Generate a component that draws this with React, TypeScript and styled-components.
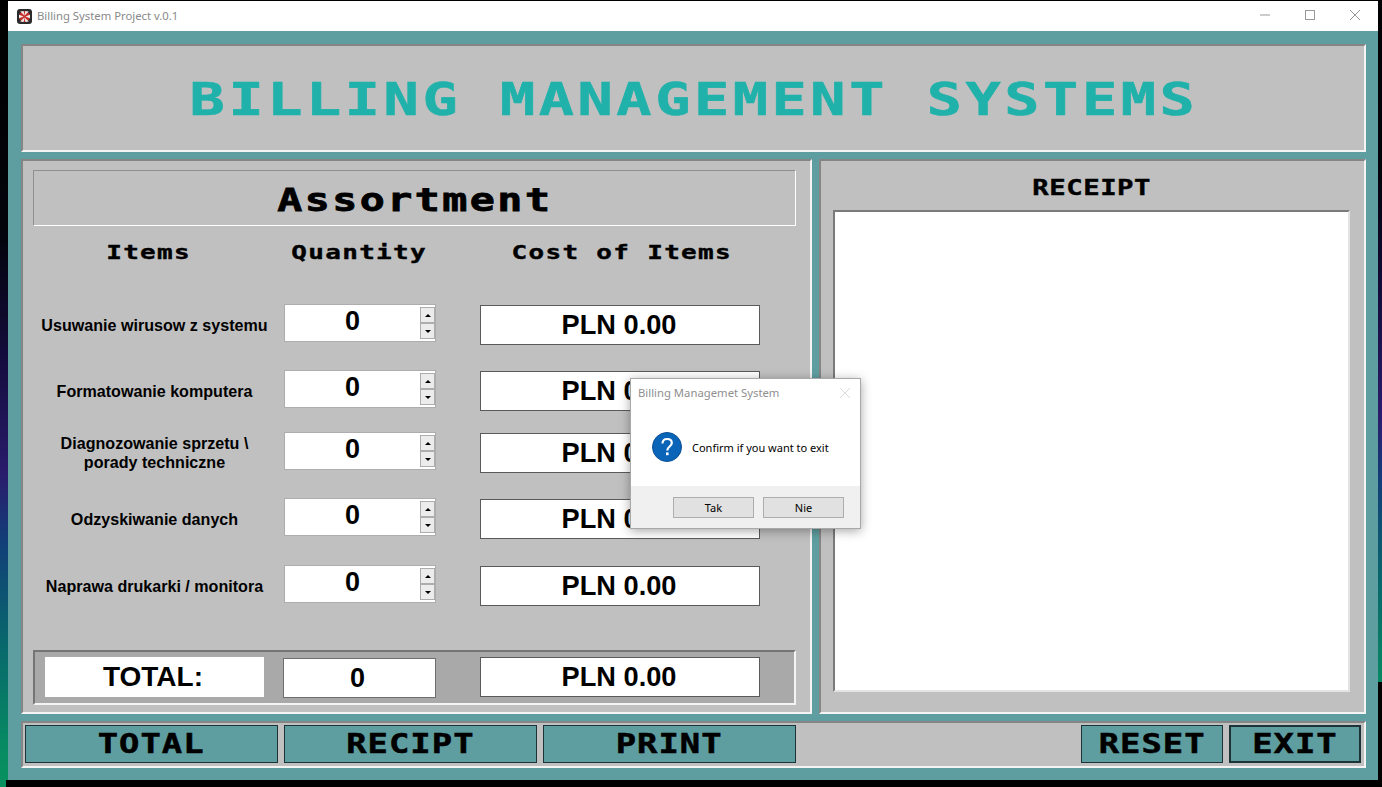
import styled, { createGlobalStyle } from "styled-components";

const GlobalStyle = createGlobalStyle`
    html, body {
        margin: 0;
        height: 100%;
        overflow: hidden;
    }
    body {
        background: #000;
    }
`

const Screen = styled.div`
    width: 1382px;
    height: 787px;
    box-sizing: border-box;
    padding: 1px 4px 7px 8px;
    position: relative;
    background: linear-gradient(177.5deg, #000 0%, #03030c 28%, #140c3c 42%, #2a1c6c 56%, #123f78 64%, #08686c 76%, #078a62 88%, #0a9a58 100%);
`

const Window = styled.div`
    height: 100%;
    display: flex;
    flex-direction: column;
    background: #5f9ea0;
`

const TitleBar = styled.div`
    height: 30px;
    flex: none;
    display: flex;
    align-items: center;
    background: #fff;
    padding-left: 9px;
    font: 11.3px "Noto Sans", sans-serif;
    color: #8a8a8a;
`

const TitleText = styled.span`
    margin-left: 5px;
    padding-bottom: 2px;
`

const WindowControls = styled.div`
    margin-left: auto;
    display: flex;
    align-items: center;
    gap: 35px;
    padding-right: 18px;
    padding-bottom: 2px;
`

const Content = styled.div`
    flex: 1;
    display: flex;
    flex-direction: column;
    gap: 7px;
    padding: 13px 12px 12px 13px;
`

const Panel = styled.div`
    box-sizing: border-box;
    background: #c0c0c0;
    border: 2px solid;
    border-color: #858585 #f4f4f4 #f4f4f4 #858585;
`

const Header = styled(Panel)`
    height: 108px;
    display: flex;
    align-items: center;
    justify-content: center;
`

const pixelFont = `"DejaVu Sans Mono", "Liberation Mono", monospace`

// the original uses a wide bitmap font, a stretched mono is the nearest we have
const Wide = styled.span`
    display: inline-block;
    transform: scaleX(1.3);
    white-space: pre;
`

const Title = styled.h1`
    margin: 3px 0 0 0;
    font: bold 45px ${pixelFont};
    letter-spacing: 2.75px;
    color: #20b2aa;
    -webkit-text-stroke: 0.6px #20b2aa;
`

const Main = styled.div`
    display: flex;
    gap: 7px;
    height: 555px;
`

const LeftPanel = styled(Panel)`
    width: 791px;
    padding: 9px 14px 7px 10px;
    display: flex;
    flex-direction: column;
`

const Heading = styled.div`
    height: 56px;
    box-sizing: border-box;
    flex: none;
    padding-top: 4px;
    display: flex;
    align-items: center;
    justify-content: center;
    border: 1px solid;
    border-color: #8f8f8f #fff #fff #8f8f8f;
    font: bold 32px ${pixelFont};
    letter-spacing: 1.9px;
    color: #000;
    -webkit-text-stroke: 0.8px #000;
`

const Columns = styled.div`
    display: grid;
    grid-template-columns: 243px 204px 280px;
    justify-items: center;
    text-align: center;
`

const ColumnHeads = styled(Columns)`
    height: 52px;
    align-items: center;
    flex: none;
    margin-bottom: 26px;
`

const ColumnHead = styled.div<{ $shift?: number }>`
    font: bold 20px ${pixelFont};
    letter-spacing: 1px;
    color: #000;
    -webkit-text-stroke: 0.4px #000;
    margin-right: ${props => props.$shift ?? 0}px;
`

const Rows = styled.div`
    display: flex;
    flex-direction: column;
`

const Row = styled(Columns)<{ $height: number }>`
    height: ${props => props.$height}px;
`

const ItemLabel = styled.div`
    height: 40px;
    margin-top: 1px;
    display: flex;
    align-items: center;
    font: bold 16.1px/19px "Liberation Sans", Arial, sans-serif;
    color: #000;
`

const Spinner = styled.div`
    width: 152px;
    height: 38px;
    box-sizing: border-box;
    justify-self: start;
    margin-left: 8px;
    display: flex;
    align-items: stretch;
    background: #fff;
    border: 1px solid #adadad;
`

const SpinnerValue = styled.div`
    flex: 1;
    text-align: center;
    font: bold 27px/32px "Liberation Sans", Arial, sans-serif;
    color: #000;
`

const SpinnerArrows = styled.div`
    width: 15px;
    margin: 2px 0;
    display: flex;
    flex-direction: column;
`

const SpinnerArrow = styled.div<{ $down?: boolean }>`
    flex: 1;
    box-sizing: border-box;
    display: flex;
    align-items: center;
    justify-content: center;
    background: #ececec;
    border: 1px solid #adadad;

    &::after {
        content: "";
        border-left: 3px solid transparent;
        border-right: 3px solid transparent;
        ${props => props.$down ? "border-top: 3px solid #000;" : "border-bottom: 3px solid #000;"}
    }
`

const CostBox = styled.div<{ $flat?: boolean }>`
    width: 280px;
    height: 40px;
    box-sizing: border-box;
    margin-top: ${props => props.$flat ? 0 : 1}px;
    padding-right: 2px;
    display: flex;
    align-items: center;
    justify-content: center;
    background: #fff;
    border: 1px solid #5a5a5a;
    font: bold 27.2px "Liberation Sans", Arial, sans-serif;
    color: #000;
`

const TotalFrame = styled(Columns)`
    margin-top: auto;
    height: 55px;
    box-sizing: border-box;
    align-items: start;
    padding-top: 5px;
    background: #a9a9a9;
    border: 2px solid;
    border-color: #757575 #f4f4f4 #f4f4f4 #757575;
    grid-template-columns: 241px 204px 280px;
`

const TotalLabel = styled.div`
    width: 219px;
    height: 40px;
    justify-self: start;
    margin-left: 10px;
    padding-right: 3px;
    box-sizing: border-box;
    display: flex;
    align-items: center;
    justify-content: center;
    background: #fff;
    font: bold 28px "Liberation Sans", Arial, sans-serif;
    color: #000;
`

const TotalQuantity = styled.div`
    width: 153px;
    height: 40px;
    box-sizing: border-box;
    justify-self: start;
    margin: 1px 0 0 7px;
    padding-right: 4px;
    display: flex;
    align-items: center;
    justify-content: center;
    background: #fff;
    border: 1px solid #6e6e6e;
    font: bold 27px "Liberation Sans", Arial, sans-serif;
    color: #000;
`

const RightPanel = styled(Panel)`
    width: 547px;
    padding: 0 14px 20px 12px;
    display: flex;
    flex-direction: column;
`

const ReceiptTitle = styled.div`
    height: 49px;
    flex: none;
    padding-top: 5px;
    box-sizing: border-box;
    display: flex;
    align-items: center;
    justify-content: center;
    font: bold 21px ${pixelFont};
    letter-spacing: 0.4px;
    color: #000;
    -webkit-text-stroke: 0.4px #000;
`

const ReceiptArea = styled.div`
    flex: 1;
    background: #fff;
    border: 2px solid;
    border-color: #7a7a7a #e3e3e3 #e3e3e3 #7a7a7a;
`

const BottomBar = styled(Panel)`
    height: 47px;
    padding: 2px 3px 3px 2px;
    display: flex;
    gap: 6px;
`

const ActionButton = styled.button<{ $width: number; $focused?: boolean; $push?: boolean }>`
    width: ${props => props.$width}px;
    height: 38px;
    box-sizing: border-box;
    padding: 0;
    margin-left: ${props => props.$push ? "auto" : "0"};
    background: #5f9ea0;
    border: ${props => props.$focused ? 2 : 1}px solid #1c3436;
    font: bold 26px ${pixelFont};
    letter-spacing: 0.8px;
    color: #000;
    -webkit-text-stroke: 0.5px #000;
`

const Dialog = styled.div`
    position: absolute;
    left: 630px;
    top: 378px;
    width: 231px;
    height: 151px;
    display: flex;
    flex-direction: column;
    background: #fff;
    box-sizing: border-box;
    border: 1px solid #a8a8a8;
    box-shadow: 0 2px 10px rgba(0, 0, 0, 0.35);
    font: 11px "Noto Sans", sans-serif;
    color: #000;
`

const DialogTitle = styled.div`
    height: 29px;
    flex: none;
    padding: 0 10px 2px 7px;
    box-sizing: border-box;
    display: flex;
    align-items: center;
    justify-content: space-between;
    font-size: 11.3px;
    color: #8f8f8f;
`

const DialogBody = styled.div`
    flex: 1;
    display: flex;
    align-items: center;
    gap: 10px;
    padding-left: 21px;
`

const DialogFooter = styled.div`
    height: 42px;
    flex: none;
    display: flex;
    justify-content: flex-end;
    gap: 9px;
    padding: 11px 16px 0 0;
    box-sizing: border-box;
    background: #f0f0f0;
`

const DialogButton = styled.button`
    width: 81px;
    height: 21px;
    padding: 0;
    box-sizing: border-box;
    background: #e1e1e1;
    border: 1px solid #adadad;
    font: 11px "Noto Sans", sans-serif;
    color: #000;
`

const BottomEdge = styled.div`
    position: absolute;
    left: 6px;
    right: 0;
    top: 780px;
    height: 7px;
    background: #000;
`

const RightEdge = styled.div`
    position: absolute;
    right: 0;
    width: 4px;
    top: 682px;
    bottom: 0;
    background: #000;
`

const items = [
    { lines: ["Usuwanie wirusow z systemu"], height: 66 },
    { lines: ["Formatowanie komputera"], height: 62 },
    { lines: ["Diagnozowanie sprzetu \\", "porady techniczne"], height: 66 },
    { lines: ["Odzyskiwanie danych"], height: 67 },
    { lines: ["Naprawa drukarki / monitora"], height: 40 },
]

function AppIcon() {
    return <svg width="15" height="15" viewBox="0 0 15 15">
        <rect x="0" y="0" width="15" height="15" rx="3" fill="#2b2b2b" />
        <circle cx="7.5" cy="7.5" r="5.5" fill="#c8302c" />
        <path d="M7.5 6.6 L3.2 2.4 L6.6 2 Z M7.5 6.6 L11.8 2.4 L8.4 2 Z" fill="#eee" />
        <path d="M7.5 8.4 L3.2 12.6 L6.6 13 Z M7.5 8.4 L11.8 12.6 L8.4 13 Z" fill="#eee" />
        <path d="M6.6 7.5 L2 5.8 L2 9.2 Z M8.4 7.5 L13 5.8 L13 9.2 Z" fill="#eee" />
    </svg>
}

function QuestionIcon() {
    return <svg width="30" height="30" viewBox="0 0 30 30">
        <circle cx="15" cy="15" r="14.5" fill="#0a64b8" stroke="#0a4f94" />
        <path d="M10.5 11.5 C10.5 8.6 12.6 7 15.2 7 C18 7 19.8 8.7 19.8 11 C19.8 14.4 15.3 14.6 15.3 18.4" fill="none" stroke="#fff" strokeWidth="2.2" />
        <rect x="14" y="20.4" width="2.6" height="2.8" fill="#fff" />
    </svg>
}

function CloseIcon({ color }: { color: string }) {
    return <svg width="10" height="10" viewBox="0 0 10 10">
        <path d="M0 0 L10 10 M10 0 L0 10" stroke={color} strokeWidth="1" fill="none" />
    </svg>
}

export default function App() {
    return <Screen>
        <GlobalStyle />
        <Window>
            <TitleBar>
                <AppIcon />
                <TitleText>Billing System Project v.0.1</TitleText>
                <WindowControls>
                    <svg width="10" height="10" viewBox="0 0 10 10"><path d="M0 5 H10" stroke="#999" /></svg>
                    <svg width="10" height="10" viewBox="0 0 10 10"><rect x="0.5" y="0.5" width="9" height="9" fill="none" stroke="#999" /></svg>
                    <CloseIcon color="#999" />
                </WindowControls>
            </TitleBar>
            <Content>
                <Header>
                    <Title><Wide>BILLING MANAGEMENT SYSTEMS</Wide></Title>
                </Header>
                <Main>
                    <LeftPanel>
                        <Heading><Wide>Assortment</Wide></Heading>
                        <ColumnHeads>
                            <ColumnHead $shift={11}><Wide>Items</Wide></ColumnHead>
                            <ColumnHead $shift={37}><Wide>Quantity</Wide></ColumnHead>
                            <ColumnHead $shift={-4}><Wide>Cost of Items</Wide></ColumnHead>
                        </ColumnHeads>
                        <Rows>
                            {items.map((item, i) =>
                                <Row key={i} $height={item.height}>
                                    <ItemLabel>
                                        <span>
                                            {item.lines.map((line, j) => <div key={j}>{line}</div>)}
                                        </span>
                                    </ItemLabel>
                                    <Spinner>
                                        <SpinnerValue>0</SpinnerValue>
                                        <SpinnerArrows>
                                            <SpinnerArrow />
                                            <SpinnerArrow $down />
                                        </SpinnerArrows>
                                    </Spinner>
                                    <CostBox>PLN 0.00</CostBox>
                                </Row>
                            )}
                        </Rows>
                        <TotalFrame>
                            <TotalLabel>TOTAL:</TotalLabel>
                            <TotalQuantity>0</TotalQuantity>
                            <CostBox $flat>PLN 0.00</CostBox>
                        </TotalFrame>
                    </LeftPanel>
                    <RightPanel>
                        <ReceiptTitle><Wide>RECEIPT</Wide></ReceiptTitle>
                        <ReceiptArea />
                    </RightPanel>
                </Main>
                <BottomBar>
                    <ActionButton $width={253}><Wide>TOTAL</Wide></ActionButton>
                    <ActionButton $width={253}><Wide>RECIPT</Wide></ActionButton>
                    <ActionButton $width={253}><Wide>PRINT</Wide></ActionButton>
                    <ActionButton $width={142} $push><Wide>RESET</Wide></ActionButton>
                    <ActionButton $width={132} $focused><Wide>EXIT</Wide></ActionButton>
                </BottomBar>
            </Content>
        </Window>
        <BottomEdge />
        <RightEdge />
        <Dialog>
            <DialogTitle>
                <span>Billing Managemet System</span>
                <CloseIcon color="#dcdcdc" />
            </DialogTitle>
            <DialogBody>
                <QuestionIcon />
                <span>Confirm if you want to exit</span>
            </DialogBody>
            <DialogFooter>
                <DialogButton>Tak</DialogButton>
                <DialogButton>Nie</DialogButton>
            </DialogFooter>
        </Dialog>
    </Screen>
}
